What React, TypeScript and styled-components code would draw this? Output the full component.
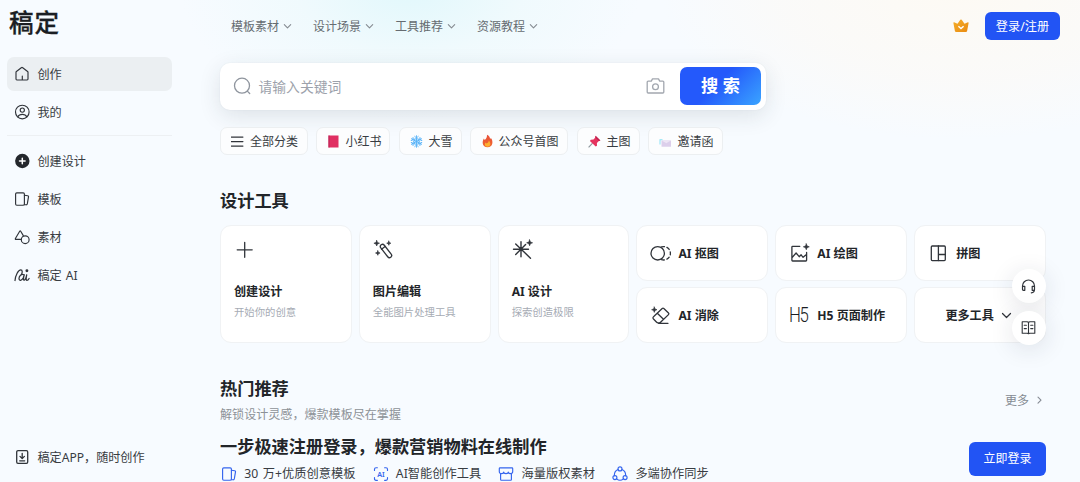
import React from "react";
import styled, { createGlobalStyle } from "styled-components";

const Global = createGlobalStyle`
  *, *::before, *::after { box-sizing: border-box; }
  body {
    margin: 0;
    overflow: hidden;
    background: #f7fbff;
    font-family: "Noto Sans", "Noto Sans CJK SC", sans-serif;
    font-size: 12px;
    line-height: 18px;
    color: #383c42;
  }
  button { font: inherit; border: 0; padding: 0; background: none; color: inherit; }
  h2, p { margin: 0; }
  svg { display: block; flex: none; }
`;

const Page = styled.div`
  position: relative;
  display: flex;
  width: 1080px;
  height: 482px;
  overflow: hidden;
  background:
    radial-gradient(ellipse 230px 130px at 410px -10px, rgba(222, 247, 251, 0.85), rgba(232, 249, 251, 0.45) 50%, rgba(247, 251, 255, 0) 100%),
    radial-gradient(ellipse 300px 150px at 960px -10px, rgba(253, 250, 244, 1), rgba(251, 250, 248, 0.85) 60%, rgba(247, 251, 255, 0) 100%),
    #f7fbff;
`;

const Sidebar = styled.aside`
  display: flex;
  flex-direction: column;
  width: 220px;
  padding: 8px 48px 7px 7px;
`;

const Logo = styled.div`
  height: 30px;
  margin: 0 0 19px 2px;
  font-size: 24.5px;
  line-height: 29px;
  font-weight: 500;
  letter-spacing: 1px;
  color: #1b1e23;
  -webkit-text-stroke: 0.3px #1b1e23;
`;

const Label = styled.span`
  padding-top: 2px;
`;

const SideItem = styled.a<{ $active?: boolean }>`
  display: flex;
  align-items: center;
  gap: 7.5px;
  height: 34px;
  margin-bottom: 4px;
  padding-left: 7px;
  border-radius: 7px;
  font-size: 12.1px;
  word-spacing: 1px;
  white-space: nowrap;
  background: ${(p) => (p.$active ? "#ebeff2" : "transparent")};
`;

const Divider = styled.div`
  height: 1px;
  margin: 2px 0 8px;
  background: #edf0f3;
`;

const SideFooter = styled.div`
  margin-top: auto;
  margin-bottom: -3px;
`;

const Main = styled.main`
  width: 826px;
  flex: none;
`;

const Header = styled.header`
  display: flex;
  align-items: center;
  height: 52px;
  margin-right: -14px;
  padding-left: 11px;
`;

const Nav = styled.nav`
  display: flex;
  gap: 20px;
  flex: 1;
  color: #666c71;
`;

const NavItem = styled.a`
  display: flex;
  align-items: center;
  gap: 4px;
  width: 62px;
  white-space: nowrap;
`;

const PrimaryButton = styled.button<{ $w: number; $h: number }>`
  width: ${(p) => p.$w}px;
  height: ${(p) => p.$h}px;
  padding-top: 1px;
  flex: none;
  border-radius: 6px;
  background: #2254f4;
  color: #fff;
`;

const LoginButton = styled(PrimaryButton)`
  margin-left: 16px;
  font-size: 12.2px;
`;

const SearchBar = styled.div`
  display: flex;
  align-items: center;
  width: 546px;
  height: 47px;
  margin-top: 11px;
  padding: 0 5px 1.5px 12.5px;
  border-radius: 10px;
  background: #fff;
  box-shadow: 0 6px 22px rgba(30, 50, 60, 0.12), 0 0 2px rgba(30, 50, 60, 0.06);
`;

const Placeholder = styled.span`
  flex: 1;
  margin-left: 8px;
  padding-top: 2px;
  font-size: 13.8px;
  color: #9da2ab;
`;

const SearchButton = styled.button`
  width: 81px;
  height: 38px;
  margin-left: 15px;
  padding-top: 1px;
  border-radius: 7px;
  background: linear-gradient(135deg, #2459fb 45%, #3aa4ff 100%);
  color: #fff;
  font-size: 17.2px;
  font-weight: 700;
`;

const Chips = styled.div`
  display: flex;
  gap: 8.4px;
  margin-top: 17px;
`;

const Chip = styled.button<{ $w: number }>`
  display: flex;
  align-items: center;
  justify-content: center;
  gap: 5.5px;
  width: ${(p) => p.$w}px;
  height: 28px;
  padding-left: 2px;
  border: 1px solid #eceff1;
  border-radius: 7px;
  background: #fcfdfe;
  white-space: nowrap;
`;

const SectionTitle = styled.h2`
  font-size: 17.2px;
  line-height: 26px;
  font-weight: 700;
  color: #222529;
`;

const ToolsTitle = styled(SectionTitle)`
  margin-top: 33px;
`;

const ToolGrid = styled.div`
  display: grid;
  grid-template-columns: repeat(6, 1fr);
  grid-template-rows: 56px 56px;
  gap: 6px 7px;
  margin-top: 11px;
`;

const Card = styled.div`
  border: 1px solid #f0f2f4;
  border-radius: 11px;
  background: #fff;
  color: #222529;
  white-space: nowrap;
`;

const TallCard = styled(Card)`
  grid-row: span 2;
  padding: 13px 13px 0;
`;

const SmallCard = styled(Card)<{ $center?: boolean }>`
  display: flex;
  align-items: center;
  justify-content: ${(p) => (p.$center ? "center" : "flex-start")};
  gap: 7px;
  padding: ${(p) => (p.$center ? "0 3px 0 0" : "0 0 0 13px")};
`;

const CardTitle = styled.div`
  padding-top: 2px;
  font-size: 12.1px;
  font-weight: 700;
`;

const TallTitle = styled(CardTitle)`
  margin-top: 20px;
`;

const CardNote = styled.div`
  margin-top: 2px;
  font-size: 10.35px;
  color: #a6abb4;
`;

const H5Mark = styled.span`
  width: 21px;
  padding-top: 1px;
  font-family: Roboto, "Noto Sans", sans-serif;
  font-size: 19.5px;
  font-weight: 300;
  letter-spacing: -1.6px;
  color: #1b1e23;
  transform: scaleX(0.86);
  transform-origin: left center;
`;

const HotRow = styled.div`
  display: flex;
  justify-content: space-between;
  align-items: center;
  margin-top: 33px;
`;

const Muted = styled.p`
  margin-top: 4px;
  font-size: 12.07px;
  color: #8d9297;
`;

const MoreLink = styled.a`
  display: flex;
  align-items: center;
  gap: 6px;
  margin-right: 2px;
  color: #858b93;
`;

const Promo = styled.div`
  display: flex;
  justify-content: space-between;
  align-items: center;
  margin-top: 10px;
`;

const Features = styled.div`
  display: flex;
  gap: 17.3px;
  margin-top: 5px;
  padding-left: 1px;
  font-size: 12.22px;
  word-spacing: 1.5px;
  white-space: nowrap;
`;

const Feature = styled.span`
  display: flex;
  align-items: center;
  gap: 7.2px;
`;

const FloatColumn = styled.div`
  position: absolute;
  top: 269px;
  left: 1011.5px;
  display: flex;
  flex-direction: column;
  gap: 7.5px;
`;

const FloatButton = styled.button`
  display: flex;
  align-items: center;
  justify-content: center;
  width: 34px;
  height: 34px;
  border-radius: 50%;
  background: #fff;
  box-shadow: 0 4px 24px rgba(30, 40, 60, 0.13);
`;

type IconProps = {
  w?: number;
  h?: number;
  box?: string;
  color?: string;
  sw?: number;
  children: React.ReactNode;
};

const Icon = ({ w = 16, h = w, box = `0 0 ${w} ${h}`, color = "#30343a", sw = 1.15, children }: IconProps) => (
  <svg width={w} height={h} viewBox={box} fill="none" stroke={color} strokeWidth={sw} strokeLinecap="round" strokeLinejoin="round">
    {children}
  </svg>
);

const Chevron = ({ color = "#858b91" }: { color?: string }) => (
  <Icon w={9} color={color} sw={1.1}>
    <path d="M1.300 2.700l3.200 3.200 3.200-3.200" />
  </Icon>
);

const star = (x: number, y: number, r: number) =>
  `M${x} ${y - r}L${x + r * 0.28} ${y - r * 0.28}L${x + r} ${y}L${x + r * 0.28} ${y + r * 0.28}L${x} ${y + r}L${x - r * 0.28} ${y + r * 0.28}L${x - r} ${y}L${x - r * 0.28} ${y - r * 0.28}Z`;

const Star = ({ x, y, r }: { x: number; y: number; r: number }) => (
  <path d={star(x, y, r)} fill="#30343a" strokeWidth={0.6} />
);

const TemplateIcon = ({ color }: { color?: string }) => (
  <Icon color={color}>
    <rect x="1.6" y="1.8" width="8.8" height="12.4" rx="1.2" />
    <path d="M10.4 4.3l3.3.5q1 .2.8 1.1l-1.2 7q-.2.9-1.1.9l-1.8-.1" />
  </Icon>
);

const sideIcons = {
  home: (
    <Icon>
      <path d="M2 6.300q0-.5.400-.8L7.300 1.700q.7-.5 1.400 0l4.900 3.800q.4.300.4.800v6.800q0 .9-.9.900H2.900q-.9 0-.9-.9zM8.300 10v4" />
    </Icon>
  ),
  user: (
    <Icon>
      <circle cx="8.300" cy="8" r="6.800" />
      <circle cx="8.300" cy="6.100" r="2.100" />
      <path d="M3.900 12.800c.8-1.700 2.400-2.400 4.400-2.400s3.600.7 4.400 2.400" />
    </Icon>
  ),
  plus: (
    <Icon>
      <circle cx="8.300" cy="8" r="7.200" fill="#24272c" stroke="none" />
      <path d="M8.300 5.200v5.600M5.500 8h5.600" stroke="#fff" strokeWidth="1.500" />
    </Icon>
  ),
  shapes: (
    <Icon>
      <path d="M7 10.400H1.900q-.9 0-.5-.9l4.300-7.300q.5-.8 1 0l2.600 4.400" />
      <circle cx="11.200" cy="10.700" r="3.900" />
    </Icon>
  ),
  ai: (
    <Icon sw={1.25}>
      <path d="M1 13.500C1.500 8.500 4.200 2.900 6.800 2.900c1.900 0 1.600 2.600.7 4.600" />
      <path d="M9.800 7.700C7.400 6.600 5 9.100 5 11.400c0 2.700 2.900 2.400 4.200-.4l1.100-3.200c-.9 2.600-1.100 5.400-.1 5.400 1 0 1.900-2.600 2.500-5.300-.5 2.300-.9 5.500.2 5.500.9 0 1.600-.8 2.200-1.900" />
      <circle cx="12.900" cy="3.800" r="1.450" fill="#30343a" stroke="none" />
    </Icon>
  ),
  app: (
    <Icon sw={1.3}>
      <rect x="2.700" y="1.700" width="11" height="12.600" rx="1.300" />
      <path d="M8.200 4.300v5M6 7.400l2.200 2.200 2.200-2.200M5.700 11.800h5" />
    </Icon>
  ),
};

const SnowIcon = () => (
  <Icon w={13} box="-6.5 -6.5 13 13" color="#56b2f8" sw={0.9}>
    {[0, 60, 120, 180, 240, 300].map((a) => (
      <path key={a} transform={`rotate(${a})`} d="M0 0v-5.800M-1.800-5.100L0-3.600 1.800-5.100M-1.300-2.900L0-1.800l1.300-1.100" />
    ))}
  </Icon>
);

const FireIcon = () => (
  <svg width="11" height="14" viewBox="0 0 11 14">
    <defs>
      <linearGradient id="fire" x1="0" y1="0" x2="0" y2="1">
        <stop offset="0" stopColor="#e8503a" />
        <stop offset="1" stopColor="#f0662d" />
      </linearGradient>
    </defs>
    <path d="M5 .8c2 .9 3 2.400 3.100 4.200l.8-1.100C10.300 5.700 10.700 7.500 10.300 9.500 9.800 12 8 13.200 5.500 13.200S1 11.800.7 9.300C.5 7.500 1.100 5.900 1.900 4.500l.8 1.600C4.300 4.700 5.200 3.100 5 .8z" fill="url(#fire)" />
    <path d="M6.900 6.500c2 2.400 2.200 6.200-1.300 6.200-3 0-3.300-2.600-2-4.200l.8 1C5.800 9 6.600 8 6.900 6.500z" fill="#fdb02f" />
  </svg>
);

const PinIcon = () => (
  <svg width="13" height="13" viewBox="0 0 13 13">
    <path d="M4.600 8.100L.6 12.300" stroke="#8b949b" strokeWidth="1.100" />
    <path d="M7.500.7l4.900 4.700-1.500.5-2 2.200.1 2.700-1.300.8L1.900 6l.9-1.300 2.700-.1L7.300 2.400z" fill="#e5335e" />
    <path d="M7.500.7l4.900 4.700-1.500.5-3.600-3.500z" fill="#bd2450" />
  </svg>
);

const EnvelopeIcon = () => (
  <svg width="13" height="13" viewBox="0 0 13 13">
    <path d="M.5 4.200h3v1h-2v4.300h-1z" fill="#8be2f5" />
    <rect x="2.500" y="5.500" width="9.500" height="6.300" rx=".6" fill="#dccfeb" />
    <path d="M2.700 5.900l4.600 2.600 4.500-2.600" fill="#eee5f5" stroke="#d2c6e6" strokeWidth=".4" />
  </svg>
);

const chips = [
  { label: "全部分类", w: 87.5, icon: <Icon w={13} sw={1.25}><path d="M.5 2h11.400M.5 6.500h11.400M.5 11h11.400" /></Icon> },
  { label: "小红书", w: 74.5, icon: <svg width="13" height="13"><rect x="1.500" y=".5" width="10" height="12" fill="#e02f62" /><path d="M2 .5v12" stroke="#b92355" /></svg> },
  { label: "大雪", w: 62.8, icon: <SnowIcon /> },
  { label: "公众号首图", w: 98.5, icon: <FireIcon /> },
  { label: "主图", w: 62.8, icon: <PinIcon /> },
  { label: "邀请函", w: 74.5, icon: <EnvelopeIcon /> },
];

const tallTools = [
  {
    title: "创建设计",
    note: "开始你的创意",
    icon: <Icon w={22} sw={1.3}><path d="M10.700 3.300v15M3.200 10.800h15" /></Icon>,
  },
  {
    title: "图片编辑",
    note: "全能图片处理工具",
    icon: (
      <Icon w={22} sw={1.3}>
        <rect x="-2.200" y="-7.800" width="4.400" height="15.600" rx="2.200" transform="translate(13 12) rotate(-38)" />
        <path d="M8.500 10.200l3.600-2.800" />
        <Star x={3.700} y={4.200} r={2.800} />
        <Star x={15.800} y={4.200} r={2.100} />
        <Star x={4.800} y={14} r={2.300} />
      </Icon>
    ),
  },
  {
    title: "AI 设计",
    note: "探索创造极限",
    icon: (
      <Icon w={22} sw={1.4}>
        <path d="M9 2.700v15M1.500 10.200h15M3.700 4.900l14.800 14.300M13.600 5.600l-9.900 9.900" />
        <Star x={17.600} y={3.800} r={3} />
      </Icon>
    ),
  },
];

const smallTools = [
  {
    title: "AI 抠图",
    icon: (
      <Icon w={21} sw={1.3}>
        <circle cx="7.700" cy="10.300" r="6.700" />
        <path d="M11.500 3.900q1-.3 2.200-.3a6.700 6.700 0 010 13.400q-1.200 0-2.200-.3" strokeDasharray="3 2.600" />
      </Icon>
    ),
  },
  {
    title: "AI 绘图",
    icon: (
      <Icon w={21} sw={1.3}>
        <path d="M10.800 3.300H3.600q-.7 0-.7.700v13.300q0 .7.700.7h13.300q.7 0 .7-.7V9.500M3.100 14.500l4-4.500 3.100 3.700 1.900-1.900 2 2.500 3.300-2.800" />
        <Star x={17.300} y={3.800} r={3} />
      </Icon>
    ),
  },
  {
    title: "拼图",
    icon: (
      <Icon w={21} sw={1.3}>
        <rect x="3.300" y="3" width="14" height="14.600" rx="1" />
        <path d="M10.400 3v14.600M10.400 11.500h6.900" />
      </Icon>
    ),
  },
  {
    title: "AI 消除",
    icon: (
      <Icon w={21} sw={1.3}>
        <path d="M4 11.200L12.200 3.500q.8-.7 1.600 0l4.700 4.500q.8.800 0 1.600L10.800 17q-.8.800-1.600.8H8q-.8 0-1.600-.8L3.500 14Q2.200 12.700 4 11.200zM7.300 8.300l6.200 5.900M8.500 18.300h9.500" />
        <Star x={4.300} y={4.700} r={2.700} />
      </Icon>
    ),
  },
  { title: "H5 页面制作", icon: <H5Mark>H5</H5Mark> },
];

const blue = "#3565ee";

const features = [
  { label: "30 万+优质创意模板", icon: <TemplateIcon color={blue} /> },
  {
    label: "AI智能创作工具",
    icon: (
      <Icon color={blue}>
        <path d="M1.500 4.500V3.200q0-1.500 1.500-1.500h1.400M11.600 1.700H13q1.500 0 1.500 1.500v1.300M14.500 11.500v1.300q0 1.500-1.500 1.500h-1.400M4.400 14.300H3q-1.500 0-1.500-1.500v-1.300" />
        <text x="8" y="10.600" fontSize="7.200" textAnchor="middle" fill={blue} stroke="none" fontWeight="600" wordSpacing="0">AI</text>
      </Icon>
    ),
  },
  {
    label: "海量版权素材",
    icon: (
      <Icon color={blue}>
        <path d="M2 1.900h12q.7 0 .7.700v3.200q0 1.800-2.200 1.800T10.300 6q0 1.600-2.300 1.600T5.700 6q0 1.600-2.200 1.600T1.300 5.800V2.600q0-.7.700-.7zM2.600 7.800v5.700q0 .7.700.7h9.400q.7 0 .7-.7V7.800" />
      </Icon>
    ),
  },
  {
    label: "多端协作同步",
    icon: (
      <Icon color={blue}>
        <circle cx="8" cy="2.900" r="2" />
        <circle cx="2.900" cy="11.600" r="2" />
        <circle cx="13.100" cy="11.600" r="2" />
        <path d="M6.100 3.500C3.600 4.500 2.200 6.800 2.400 9.600M9.900 3.500c2.500 1 3.900 3.300 3.700 6.100M4.600 12.900c2.100 1.700 4.700 1.700 6.800 0" />
      </Icon>
    ),
  },
];

const Crown = () => (
  <svg width="16" height="14" viewBox="0 0 16 14">
    <defs>
      <linearGradient id="crown" x1="0" y1="0" x2="1" y2="1">
        <stop offset="0" stopColor="#f5af2a" />
        <stop offset="1" stopColor="#e98a12" />
      </linearGradient>
    </defs>
    <path d="M1.100 3.300l3.400 1.500L7.300.8q.7-.8 1.400 0l2.800 4 3.400-1.500q.8-.1.700.7l-1.500 8q-.2 1-1.200 1H3.100q-1 0-1.200-1L.4 4q-.1-.8.700-.7z" fill="url(#crown)" />
    <path d="M5.400 7.200L8 9.600l2.600-2.400" fill="none" stroke="#fff" strokeWidth="1.400" />
  </svg>
);

export default function App() {
  return (
    <>
      <Global />
      <Page>
        <Sidebar>
          <Logo>稿定</Logo>
          <SideItem $active>{sideIcons.home}<Label>创作</Label></SideItem>
          <SideItem>{sideIcons.user}<Label>我的</Label></SideItem>
          <Divider />
          <SideItem>{sideIcons.plus}<Label>创建设计</Label></SideItem>
          <SideItem><TemplateIcon /><Label>模板</Label></SideItem>
          <SideItem>{sideIcons.shapes}<Label>素材</Label></SideItem>
          <SideItem>{sideIcons.ai}<Label>稿定 AI</Label></SideItem>
          <SideFooter>
            <SideItem>{sideIcons.app}<Label>稿定APP，随时创作</Label></SideItem>
          </SideFooter>
        </Sidebar>
        <Main>
          <Header>
            <Nav>
              {["模板素材", "设计场景", "工具推荐", "资源教程"].map((n) => (
                <NavItem key={n}><Label>{n}</Label><Chevron /></NavItem>
              ))}
            </Nav>
            <Crown />
            <LoginButton $w={75} $h={28}>登录/注册</LoginButton>
          </Header>
          <SearchBar>
            <Icon w={18} color="#8f959e" sw={1.3}>
              <circle cx="9" cy="8.700" r="7.500" />
              <path d="M14.300 14.100l2.400 2.400" />
            </Icon>
            <Placeholder>请输入关键词</Placeholder>
            <Icon w={19} h={18} color="#a2a7af" sw={1.3}>
              <path d="M2.200 4.100h3.100l1.200-2.200h6l1.200 2.200h3.100q1 0 1 1v9.900q0 1-1 1H2.200q-1 0-1-1V5.100q0-1 1-1z" />
              <circle cx="9.500" cy="9.700" r="2.900" />
            </Icon>
            <SearchButton>搜 索</SearchButton>
          </SearchBar>
          <Chips>
            {chips.map((c) => (
              <Chip key={c.label} $w={c.w}>{c.icon}<Label>{c.label}</Label></Chip>
            ))}
          </Chips>
          <ToolsTitle>设计工具</ToolsTitle>
          <ToolGrid>
            {tallTools.map((t) => (
              <TallCard key={t.title}>
                {t.icon}
                <TallTitle>{t.title}</TallTitle>
                <CardNote>{t.note}</CardNote>
              </TallCard>
            ))}
            {smallTools.map((t) => (
              <SmallCard key={t.title}>{t.icon}<CardTitle>{t.title}</CardTitle></SmallCard>
            ))}
            <SmallCard $center>
              <CardTitle>更多工具</CardTitle>
              <Icon w={11} sw={1.2}><path d="M1.500 3.500l4 4 4-4" /></Icon>
            </SmallCard>
          </ToolGrid>
          <HotRow>
            <div>
              <SectionTitle>热门推荐</SectionTitle>
              <Muted>解锁设计灵感，爆款模板尽在掌握</Muted>
            </div>
            <MoreLink>
              <Label>更多</Label>
              <Icon w={9} color="#858b93" sw={1.1}><path d="M3 1.200l3 3-3 3" /></Icon>
            </MoreLink>
          </HotRow>
          <Promo>
            <div>
              <SectionTitle>一步极速注册登录，爆款营销物料在线制作</SectionTitle>
              <Features>
                {features.map((f) => (
                  <Feature key={f.label}>{f.icon}{f.label}</Feature>
                ))}
              </Features>
            </div>
            <PrimaryButton $w={77} $h={34}>立即登录</PrimaryButton>
          </Promo>
        </Main>
        <FloatColumn>
          <FloatButton>
            <Icon w={15} sw={1.2}>
              <path d="M1.500 8.500V7a6 6 0 0112 0v3.500q0 3-3.200 3.300M1.500 7.300h2.300v4H2.500q-1 0-1-1zM13.500 7.300h-2.300v4h1.300q1 0 1-1z" />
            </Icon>
          </FloatButton>
          <FloatButton>
            <Icon w={15} sw={1.1}>
              <path d="M7.500 2.300v11.200M1.200 1.800h5.100l1.200.6 1.200-.6h5.100v11.400H8.700l-1.200.5-1.200-.5H1.200zM3.200 5.200h2.200M3.200 8.600h2.200M9.700 5.200h2.200M9.700 8.600h2.200" />
            </Icon>
          </FloatButton>
        </FloatColumn>
      </Page>
    </>
  );
}
